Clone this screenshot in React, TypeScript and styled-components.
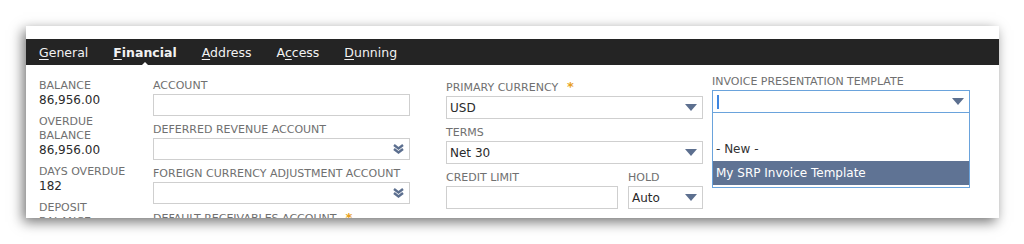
import styled, { createGlobalStyle } from "styled-components";

const GlobalStyle = createGlobalStyle`
  html, body {
    margin: 0;
    padding: 0;
    background: #ffffff;
  }
  body {
    font-family: "DejaVu Sans", Verdana, sans-serif;
  }
`;

const Stage = styled.div`
  width: 1024px;
  height: 244px;
  padding: 26px 25px 0 26px;
  box-sizing: border-box;
  overflow: hidden;
`;

const Panel = styled.div`
  height: 192px;
  background: #ffffff;
  padding-top: 13px;
  box-sizing: border-box;
  overflow: hidden;
  box-shadow: -3px 4px 12px rgba(0, 0, 0, 0.55);
`;

const TabBar = styled.nav`
  height: 26px;
  background: #242424;
  display: flex;
  align-items: center;
  gap: 25px;
  padding-left: 13px;
`;

const Tab = styled.span<{ $active?: boolean }>`
  position: relative;
  color: #f2f2f2;
  font-size: 12.5px;
  font-weight: ${(p) => (p.$active ? 700 : 400)};

  u {
    text-decoration: underline;
    text-underline-offset: 2px;
  }

  ${(p) =>
    p.$active &&
    `
    &::after {
      content: "";
      position: absolute;
      left: 50%;
      bottom: -7px;
      margin-left: -5px;
      border-left: 5px solid transparent;
      border-right: 5px solid transparent;
      border-bottom: 5px solid #ffffff;
    }
  `}
`;

const Body = styled.div`
  display: grid;
  grid-template-columns: 114px 293px 266px 258px;
  padding-left: 13px;
`;

const Column = styled.div<{ $top: number }>`
  position: relative;
  padding-top: ${(p) => p.$top}px;
`;

const StatBlock = styled.div`
  margin-bottom: 7px;
`;

const StatLabel = styled.div`
  font-size: 11px;
  line-height: 14px;
  color: #707070;
  text-transform: uppercase;
`;

const StatValue = styled.div`
  font-size: 12px;
  line-height: 15px;
  color: #2a2a2a;
`;

const Field = styled.div<{ $width?: number }>`
  position: relative;
  width: ${(p) => (p.$width ? `${p.$width}px` : "100%")};
  margin-bottom: 7px;
`;

const FieldRow = styled.div`
  display: flex;
  gap: 10px;
`;

const Label = styled.div`
  font-size: 11px;
  line-height: 14px;
  color: #707070;
  text-transform: uppercase;
  white-space: nowrap;
  margin-bottom: 1px;
`;

const Required = styled.span`
  color: #e8a020;
  font-size: 13px;
  font-weight: 700;
  margin-left: 9px;
`;

const Box = styled.div<{ $focus?: boolean; $tall?: boolean }>`
  height: ${(p) => (p.$tall ? 23 : 22)}px;
  box-sizing: border-box;
  border: 1px solid ${(p) => (p.$focus ? "#6aa3dc" : "#cfcfcf")};
  background: #ffffff;
  display: flex;
  align-items: center;
  justify-content: space-between;
  padding: 0 5px 0 3px;
  font-size: 12px;
  color: #2a2a2a;
`;

const Caret = styled.span`
  width: 2px;
  height: 14px;
  margin-left: 1px;
  background: #3f86e0;
`;

const Arrow = () => (
  <svg width="12" height="7" viewBox="0 0 12 7">
    <path d="M0 0 H12 L6 7 Z" fill="#5c6f8f" />
  </svg>
);

const DoubleChevron = () => (
  <svg width="11" height="10" viewBox="0 0 11 10">
    <path
      d="M1 1 L5.5 4.5 L10 1 M1 5 L5.5 8.5 L10 5"
      fill="none"
      stroke="#5c6f8f"
      strokeWidth="2.4"
    />
  </svg>
);

const DropList = styled.div`
  position: absolute;
  left: 0;
  right: 0;
  top: 38px;
  background: #ffffff;
  border: 1px solid #6aa3dc;
  border-top: none;
  padding-bottom: 2px;
`;

const Option = styled.div<{ $selected?: boolean }>`
  height: 24px;
  line-height: 24px;
  padding-left: 3px;
  font-size: 12px;
  color: ${(p) => (p.$selected ? "#ffffff" : "#333333")};
  background: ${(p) => (p.$selected ? "#5f7394" : "transparent")};
`;

const stats = [
  { label: ["Balance"], value: "86,956.00" },
  { label: ["Overdue", "Balance"], value: "86,956.00" },
  { label: ["Days Overdue"], value: "182" },
  { label: ["Deposit", "Balance"], value: "" },
];

export default function App() {
  return (
    <>
      <GlobalStyle />
      <Stage>
        <Panel>
          <TabBar>
            <Tab>
              <u>G</u>eneral
            </Tab>
            <Tab $active>
              <u>F</u>inancial
            </Tab>
            <Tab>
              <u>A</u>ddress
            </Tab>
            <Tab>
              A<u>c</u>cess
            </Tab>
            <Tab>
              <u>D</u>unning
            </Tab>
          </TabBar>

          <Body>
            <Column $top={14}>
              {stats.map((s) => (
                <StatBlock key={s.label.join(" ")}>
                  {s.label.map((l) => (
                    <StatLabel key={l}>{l}</StatLabel>
                  ))}
                  {s.value && <StatValue>{s.value}</StatValue>}
                </StatBlock>
              ))}
            </Column>

            <Column $top={14}>
              <Field $width={257}>
                <Label>Account</Label>
                <Box />
              </Field>
              <Field $width={257}>
                <Label>Deferred Revenue Account</Label>
                <Box>
                  <span />
                  <DoubleChevron />
                </Box>
              </Field>
              <Field $width={257}>
                <Label>Foreign Currency Adjustment Account</Label>
                <Box>
                  <span />
                  <DoubleChevron />
                </Box>
              </Field>
              <Field $width={257}>
                <Label>
                  Default Receivables Account<Required>*</Required>
                </Label>
                <Box />
              </Field>
            </Column>

            <Column $top={15}>
              <Field $width={257}>
                <Label>
                  Primary Currency<Required>*</Required>
                </Label>
                <Box $tall>
                  USD
                  <Arrow />
                </Box>
              </Field>
              <Field $width={257}>
                <Label>Terms</Label>
                <Box $tall>
                  Net 30
                  <Arrow />
                </Box>
              </Field>
              <FieldRow>
                <Field $width={172}>
                  <Label>Credit Limit</Label>
                  <Box $tall />
                </Field>
                <Field $width={75}>
                  <Label>Hold</Label>
                  <Box $tall>
                    Auto
                    <Arrow />
                  </Box>
                </Field>
              </FieldRow>
              <Field $width={257}>
                <Label>Price Level</Label>
                <Box $tall />
              </Field>
            </Column>

            <Column $top={10}>
              <Field $width={258}>
                <Label>Invoice Presentation Template</Label>
                <Box $focus $tall>
                  <Caret />
                  <Arrow />
                </Box>
                <DropList>
                  <Option />
                  <Option>- New -</Option>
                  <Option $selected>My SRP Invoice Template</Option>
                </DropList>
              </Field>
            </Column>
          </Body>
        </Panel>
      </Stage>
    </>
  );
}
